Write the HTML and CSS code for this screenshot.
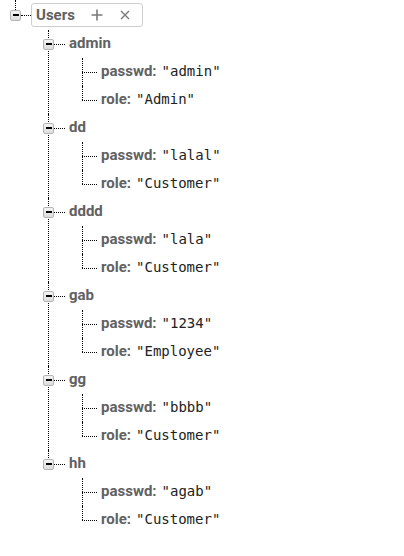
FILE: index.html
```html
<!DOCTYPE html>
<html>
<head>
<meta charset="utf-8">
<link rel="stylesheet" href="styles.css">
</head>
<body>
<ul class="tree root">
  <li class="node root-node">
    <div class="row root-row">
      <span class="toggle"><span class="minus"></span></span>
      <span class="conn conn-root"></span>
      <span class="users-box">
        <span class="users-label">Users</span>
        <svg class="ico plus" width="12" height="12" viewBox="0 0 12 12"><path d="M6 0.5V11.5M0.5 6H11.5" stroke="#7a7a7a" stroke-width="1.6" fill="none"/></svg>
        <svg class="ico cross" width="10" height="10" viewBox="0 0 10 10"><path d="M1 1L9 9M9 1L1 9" stroke="#7a7a7a" stroke-width="1.4" fill="none"/></svg>
      </span>
    </div>
    <ul class="children lvl1">
      <li class="node">
        <div class="row"><span class="toggle"><span class="minus"></span></span><span class="conn conn-l1"></span><span class="key">admin</span></div>
        <ul class="children lvl2">
          <li class="leaf"><div class="row"><span class="conn conn-l2"></span><span class="key">passwd:</span><span class="val">"admin"</span></div></li>
          <li class="leaf"><div class="row"><span class="conn conn-l2"></span><span class="key">role:</span><span class="val">"Admin"</span></div></li>
        </ul>
      </li>
      <li class="node">
        <div class="row"><span class="toggle"><span class="minus"></span></span><span class="conn conn-l1"></span><span class="key">dd</span></div>
        <ul class="children lvl2">
          <li class="leaf"><div class="row"><span class="conn conn-l2"></span><span class="key">passwd:</span><span class="val">"lalal"</span></div></li>
          <li class="leaf"><div class="row"><span class="conn conn-l2"></span><span class="key">role:</span><span class="val">"Customer"</span></div></li>
        </ul>
      </li>
      <li class="node">
        <div class="row"><span class="toggle"><span class="minus"></span></span><span class="conn conn-l1"></span><span class="key">dddd</span></div>
        <ul class="children lvl2">
          <li class="leaf"><div class="row"><span class="conn conn-l2"></span><span class="key">passwd:</span><span class="val">"lala"</span></div></li>
          <li class="leaf"><div class="row"><span class="conn conn-l2"></span><span class="key">role:</span><span class="val">"Customer"</span></div></li>
        </ul>
      </li>
      <li class="node">
        <div class="row"><span class="toggle"><span class="minus"></span></span><span class="conn conn-l1"></span><span class="key">gab</span></div>
        <ul class="children lvl2">
          <li class="leaf"><div class="row"><span class="conn conn-l2"></span><span class="key">passwd:</span><span class="val">"1234"</span></div></li>
          <li class="leaf"><div class="row"><span class="conn conn-l2"></span><span class="key">role:</span><span class="val">"Employee"</span></div></li>
        </ul>
      </li>
      <li class="node">
        <div class="row"><span class="toggle"><span class="minus"></span></span><span class="conn conn-l1"></span><span class="key">gg</span></div>
        <ul class="children lvl2">
          <li class="leaf"><div class="row"><span class="conn conn-l2"></span><span class="key">passwd:</span><span class="val">"bbbb"</span></div></li>
          <li class="leaf"><div class="row"><span class="conn conn-l2"></span><span class="key">role:</span><span class="val">"Customer"</span></div></li>
        </ul>
      </li>
      <li class="node">
        <div class="row"><span class="toggle"><span class="minus"></span></span><span class="conn conn-l1"></span><span class="key">hh</span></div>
        <ul class="children lvl2">
          <li class="leaf"><div class="row"><span class="conn conn-l2"></span><span class="key">passwd:</span><span class="val">"agab"</span></div></li>
          <li class="leaf"><div class="row"><span class="conn conn-l2"></span><span class="key">role:</span><span class="val">"Customer"</span></div></li>
        </ul>
      </li>
    </ul>
  </li>
</ul>
</body>
</html>
```

FILE: styles.css
```css
html, body {
  margin: 0;
  padding: 0;
  background: #ffffff;
}
body {
  font-family: Roboto, "Liberation Sans", sans-serif;
  width: 404px;
  height: 556px;
  overflow: hidden;
}
.tree, .children {
  list-style: none;
  margin: 0;
  padding: 0;
}
.tree.root {
  padding-left: 15px;
}
li {
  position: relative;
}
/* vertical connector line for each item */
li::after {
  content: "";
  position: absolute;
  left: 0;
  top: 0;
  height: 100%;
  border-left: 1px dotted #000;
  z-index: 0;
}
li:last-child::after {
  height: 14px;
}
.root-node::after {
  height: 11px;
}
.row {
  position: relative;
  display: flex;
  align-items: center;
  height: 28px;
  z-index: 1;
}
.root-row {
  height: 30px;
  margin-left: -5px;
}
.lvl1 {
  margin-left: 33px;
}
.lvl1 > li > .row {
  margin-left: -5px;
}
.lvl2 {
  margin-left: 34px;
}
.toggle {
  box-sizing: border-box;
  width: 11px;
  height: 11px;
  border: 1px solid #b4b4b4;
  border-radius: 2px;
  background: linear-gradient(#f4f4f4, #dcdcdc);
  display: flex;
  align-items: center;
  justify-content: center;
  flex: none;
}
.minus {
  display: block;
  width: 6px;
  height: 2px;
  background: #000;
}
.conn {
  display: block;
  flex: none;
  height: 0;
  border-top: 1px dotted #000;
}
.conn-root {
  width: 10px;
}
.conn-l1 {
  width: 11px;
}
.conn-l2 {
  width: 15px;
}
.key {
  font-weight: 700;
  font-size: 15px;
  line-height: 18px;
  color: #616161;
  margin-left: 4px;
  margin-top: -2px;
}
.val {
  font-family: "DejaVu Sans Mono", "Liberation Mono", monospace;
  font-size: 14px;
  line-height: 18px;
  color: #222222;
  margin-left: 5px;
  margin-top: -2px;
}
.users-box {
  box-sizing: border-box;
  display: flex;
  align-items: center;
  height: 24px;
  width: 112px;
  border: 1px solid #cfcfcf;
  border-radius: 3px;
  padding-left: 4px;
}
.users-label {
  font-weight: 700;
  font-size: 15px;
  color: #616161;
}
.ico {
  display: block;
  flex: none;
}
.plus {
  margin-left: 16px;
}
.cross {
  margin-left: 17px;
}
```
